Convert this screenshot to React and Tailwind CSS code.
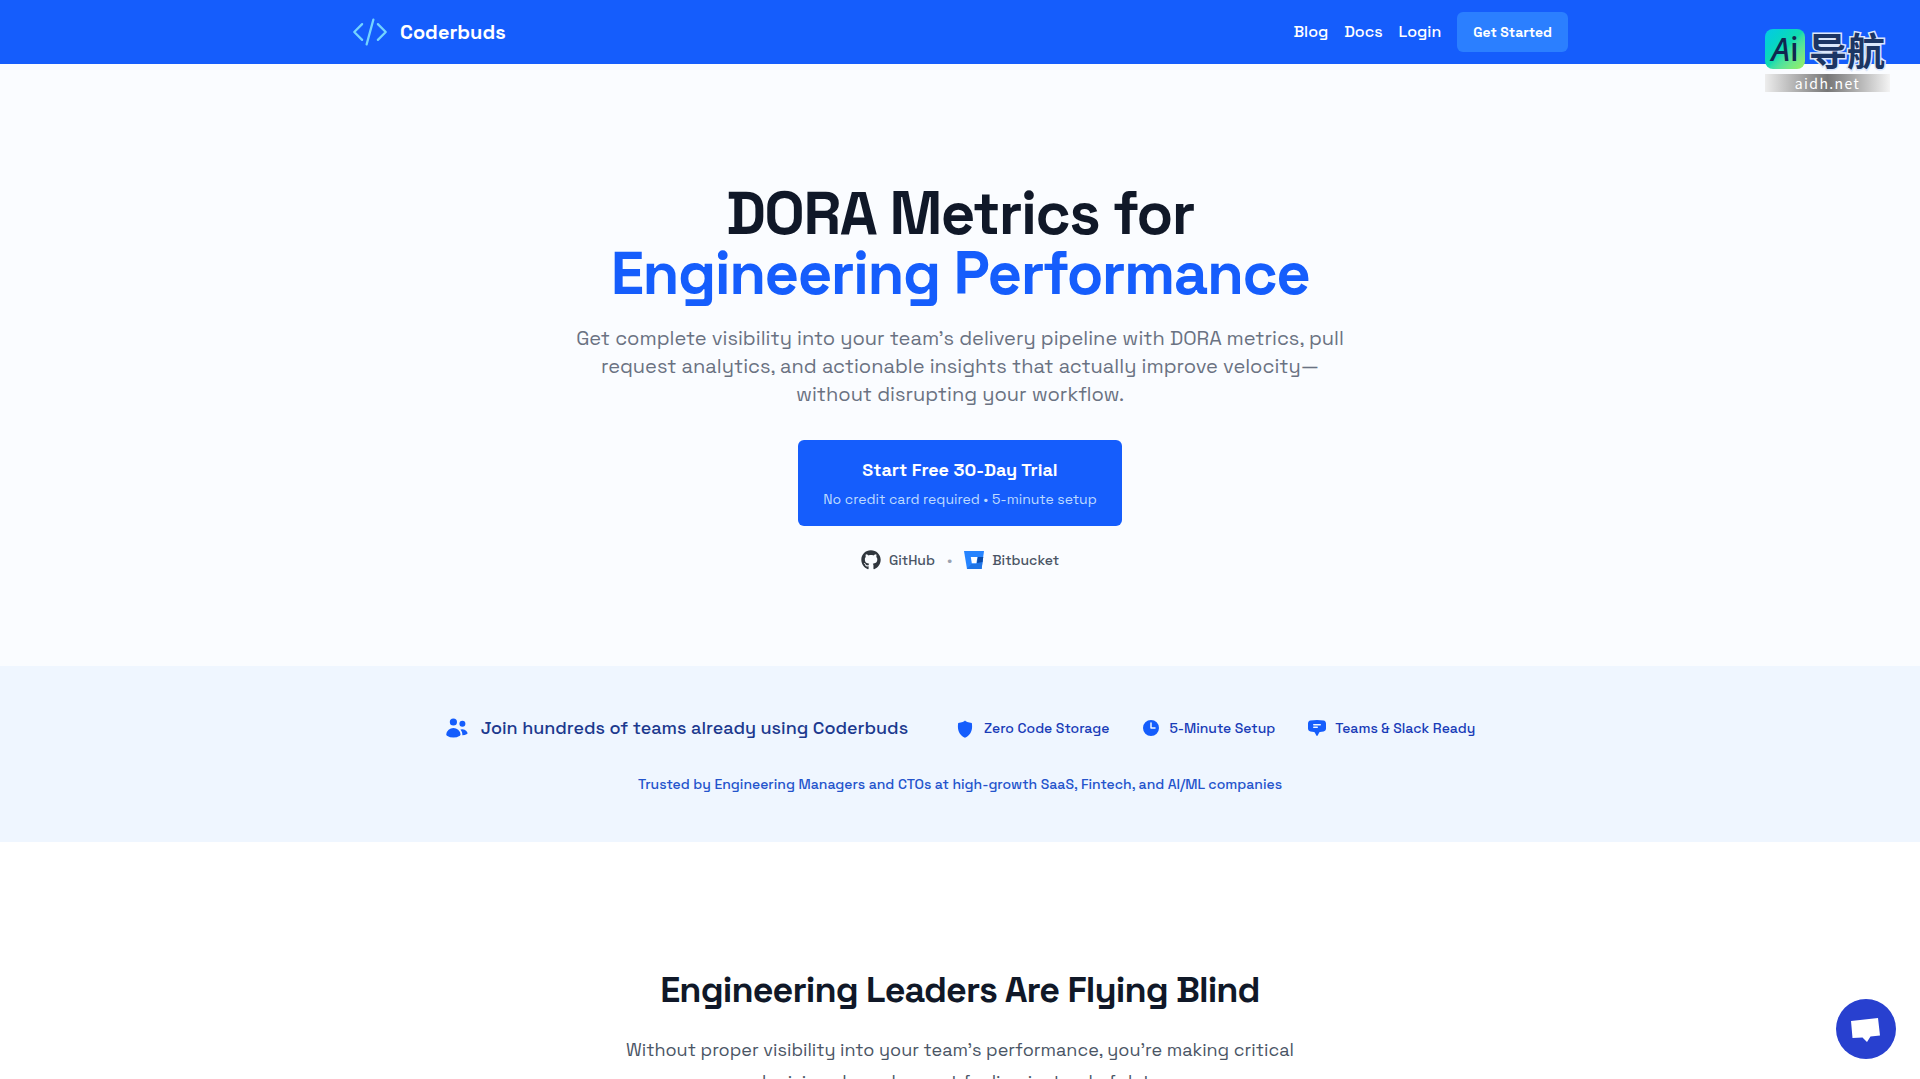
import React from "react";
import { FaGithub } from "react-icons/fa";
import {
  HiMiniChatBubbleBottomCenterText,
  HiMiniClock,
  HiMiniUsers,
  HiOutlineCodeBracket,
} from "react-icons/hi2";

const NAV_LINKS = ["Blog", "Docs", "Login"];

const ShieldIcon = ({ className }) => (
  <svg viewBox="1 -1 20 20" fill="currentColor" className={className}>
    <path d="M10 1.500c.5.8 3.400 2.300 6.800 2.400.2 1.200.3 2.400.3 3.500 0 5.300-2.700 9.300-7.100 11.400-4.400-2.100-7.100-6.100-7.100-11.400 0-1.100.1-2.300.3-3.500 3.400-.1 6.300-1.600 6.800-2.400z" />
  </svg>
);

const BitbucketIcon = () => (
  <svg viewBox="0 0 20 20" className="size-5">
    <path d="M0 1h20l-2.400 18H3z" fill="#2684ff" />
    <path d="M13.500 7H19.200L17.600 19H3l4.500-5h5z" fill="#1f74e6" />
    <path d="M14 7h5.200l-.7 5L13 13z" fill="#0b4aa8" />
    <path d="M6.800 7h6.600l-1 6.200H7.800z" fill="#fff" />
  </svg>
);

const FEATURES = [
  { label: "Zero Code Storage", Icon: ShieldIcon },
  { label: "5-Minute Setup", Icon: HiMiniClock },
  { label: "Teams & Slack Ready", Icon: HiMiniChatBubbleBottomCenterText },
];

const Header = () => (
  <header className="bg-[#155dfc]">
    <div className="mx-auto flex h-16 max-w-7xl items-center justify-between px-8">
      <a href="#home" className="flex items-center gap-3 text-white">
        <HiOutlineCodeBracket className="size-9 text-[#74d4ff]" />
        <span className="text-xl font-bold">Coderbuds</span>
      </a>
      <nav className="flex items-center gap-4">
        {NAV_LINKS.map((link) => (
          <a
            key={link}
            href={`#${link.toLowerCase()}`}
            className="text-base font-medium text-white"
          >
            {link}
          </a>
        ))}
        <a
          href="#start"
          className="flex h-10 items-center rounded-md bg-[#2b7fff] px-4 text-sm font-semibold text-white"
        >
          Get Started
        </a>
      </nav>
    </div>
  </header>
);

const Hero = () => (
  <section className="bg-[#fafcff] px-8 pt-30 pb-24 text-center">
    <h1 className="text-6xl leading-[60px] font-bold tracking-tight text-[#101828]">
      DORA Metrics for
      <span className="block text-[#155dfc]">Engineering Performance</span>
    </h1>
    <p className="mx-auto mt-5 max-w-[800px] text-xl leading-7 text-[#6a7282]">
      Get complete visibility into your team’s delivery pipeline with DORA
      metrics, pull
      <br />
      request analytics, and actionable insights that actually improve velocity—
      <br />
      without disrupting your workflow.
    </p>
    <div className="mt-8 flex justify-center">
      <button
        type="button"
        className="min-w-[324px] rounded-md bg-[#155dfc] px-6 py-4 text-white"
      >
        <span className="block text-lg leading-7 font-bold">
          Start Free 30-Day Trial
        </span>
        <span className="mt-1 block text-sm leading-[22px] text-[#bedbff]">
          No credit card required • 5-minute setup
        </span>
      </button>
    </div>
    <div className="mt-6 flex items-center justify-center gap-3 text-sm font-medium text-[#4a5565]">
      <span className="flex items-center gap-2">
        <FaGithub className="size-5 text-[#30363d]" />
        GitHub
      </span>
      <span className="text-[#99a1af]">•</span>
      <span className="flex items-center gap-2">
        <BitbucketIcon />
        Bitbucket
      </span>
    </div>
  </section>
);

const SocialProof = () => (
  <section className="bg-[#eff6ff] px-8 py-12 text-center">
    <div className="flex items-center justify-center gap-12">
      <div className="flex items-center gap-3 text-lg leading-7 font-medium text-[#1c398e]">
        <HiMiniUsers className="size-6 text-[#155dfc]" />
        Join hundreds of teams already using Coderbuds
      </div>
      <ul className="flex items-center gap-8">
        {FEATURES.map(({ label, Icon }) => (
          <li
            key={label}
            className="flex items-center gap-2 text-sm font-medium text-[#193cb8]"
          >
            <Icon className="size-5 text-[#155dfc]" />
            {label}
          </li>
        ))}
      </ul>
    </div>
    <p className="mt-8 text-sm font-medium text-[#2454cc]">
      Trusted by Engineering Managers and CTOs at high-growth SaaS, Fintech, and
      AI/ML companies
    </p>
  </section>
);

const Problem = () => (
  <section className="bg-white px-8 pt-32 text-center">
    <h2 className="text-4xl leading-10 font-bold tracking-tight text-[#101828]">
      Engineering Leaders Are Flying Blind
    </h2>
    <p className="mx-auto mt-6 text-lg leading-8 text-[#4a5565]">
      Without proper visibility into your team’s performance, you’re making
      critical
      <br />
      decisions based on gut feeling instead of data.
    </p>
  </section>
);

const Watermark = () => (
  <div className="absolute top-[29px] right-[30px] w-[125px]">
    <div className="flex items-center gap-1">
      <span className="flex size-10 items-center justify-center rounded-lg bg-linear-to-br from-[#08c8e8] via-[#12dcae] to-[#9af05a] font-['Noto_Sans',sans-serif] text-[32px] leading-none font-medium text-[#10264f]">
        <i>A</i>i
      </span>
      <span className="font-['Noto_Sans_CJK_SC',sans-serif] text-[38px] leading-[36px] font-bold text-[#1c3564] [-webkit-text-stroke:3px_#dbe7fb] [paint-order:stroke_fill]">
        导航
      </span>
    </div>
    <div className="mt-[5px] bg-linear-to-r from-[#ededed] via-[#777777] to-[#f4f4f4] text-center font-['Noto_Sans_CJK_SC',sans-serif] text-sm leading-[18px] tracking-widest text-white">
      aidh.net
    </div>
  </div>
);

const ChatButton = () => (
  <button
    type="button"
    aria-label="Open chat"
    className="fixed right-6 bottom-5 flex size-15 items-center justify-center rounded-full bg-[#2840cf]"
  >
    <svg viewBox="0 0 60 60" className="size-15" fill="#fff">
      <path d="M15 22 42 19l2 17.500-9.500 1-3.500 5.500-4.500-4.500-10 .5z" />
    </svg>
  </button>
);

const App = () => {
  return (
    <div className="relative h-screen overflow-hidden bg-white font-['Space_Grotesk','Inter',sans-serif]">
      <Header />
      <main>
        <Hero />
        <SocialProof />
        <Problem />
      </main>
      <Watermark />
      <ChatButton />
    </div>
  );
};

export default App;
